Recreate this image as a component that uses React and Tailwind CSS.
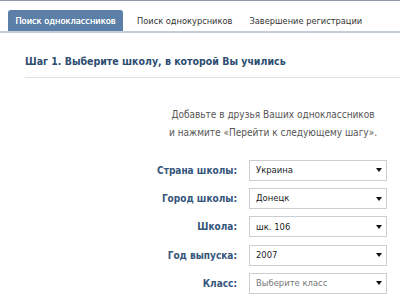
import React from 'react';

const rows = [
  { label: 'Страна школы:', value: 'Украина' },
  { label: 'Город школы:', value: 'Донецк' },
  { label: 'Школа:', value: 'шк. 106' },
  { label: 'Год выпуска:', value: '2007' },
  { label: 'Класс:', value: 'Выберите класс', placeholder: true },
];

function Select({ value, placeholder }) {
  return (
    <div className="flex items-center justify-between w-[138px] h-[21px] border border-[#cbcfd4] bg-white pl-[6px] pr-[4px] text-[9.4px]">
      <span className={placeholder ? 'text-[#777]' : 'text-[#222]'}>{value}</span>
      <span className="w-0 h-0 border-l-[3.5px] border-r-[3.5px] border-t-[4px] border-l-transparent border-r-transparent border-t-[#111]" />
    </div>
  );
}

export default function App() {
  return (
    <div
      className="w-[400px] h-[305px] bg-white overflow-hidden border-t border-[#939ca6]"
      style={{ fontFamily: "'DejaVu Sans Condensed', 'DejaVu Sans', sans-serif" }}
    >
      {/* Tabs */}
      <div className="flex items-end pl-[8px] pt-[9px] border-b-2 border-[#c4ccd5] text-[9.2px] whitespace-nowrap">
        <div className="h-[21px] w-[115px] flex items-center justify-center rounded-t-[3px] bg-[#5b7fa7] text-white [text-shadow:0_0_0.4px_#fff]">
          Поиск одноклассников
        </div>
        <div className="h-[21px] pl-[14px] flex items-center text-[#333]">Поиск однокурсников</div>
        <div className="h-[21px] pl-[17px] flex items-center text-[#333]">Завершение регистрации</div>
      </div>

      {/* Step title */}
      <div className="ml-[25px] mt-[21px] pb-[7px] border-b border-[#dde3e9]">
        <h2 className="text-[10.5px] font-bold text-[#2d4d72]">Шаг 1. Выберите школу, в которой Вы учились</h2>
      </div>

      {/* Hint */}
      <div className="mt-[28px] pl-[146px] text-center text-[#555] text-[10px] leading-[18px]">
        Добавьте в друзья Ваших одноклассников
        <br />
        и нажмите «Перейти к следующему шагу».
      </div>

      {/* Form */}
      <div className="mt-[18px] flex flex-col gap-[7.25px]">
        {rows.map((r) => (
          <div key={r.label} className="flex items-center">
            <div className="w-[237px] text-right font-bold text-[#36567c] text-[10px]">{r.label}</div>
            <div className="ml-[12px]">
              <Select value={r.value} placeholder={r.placeholder} />
            </div>
          </div>
        ))}
      </div>
    </div>
  );
}
